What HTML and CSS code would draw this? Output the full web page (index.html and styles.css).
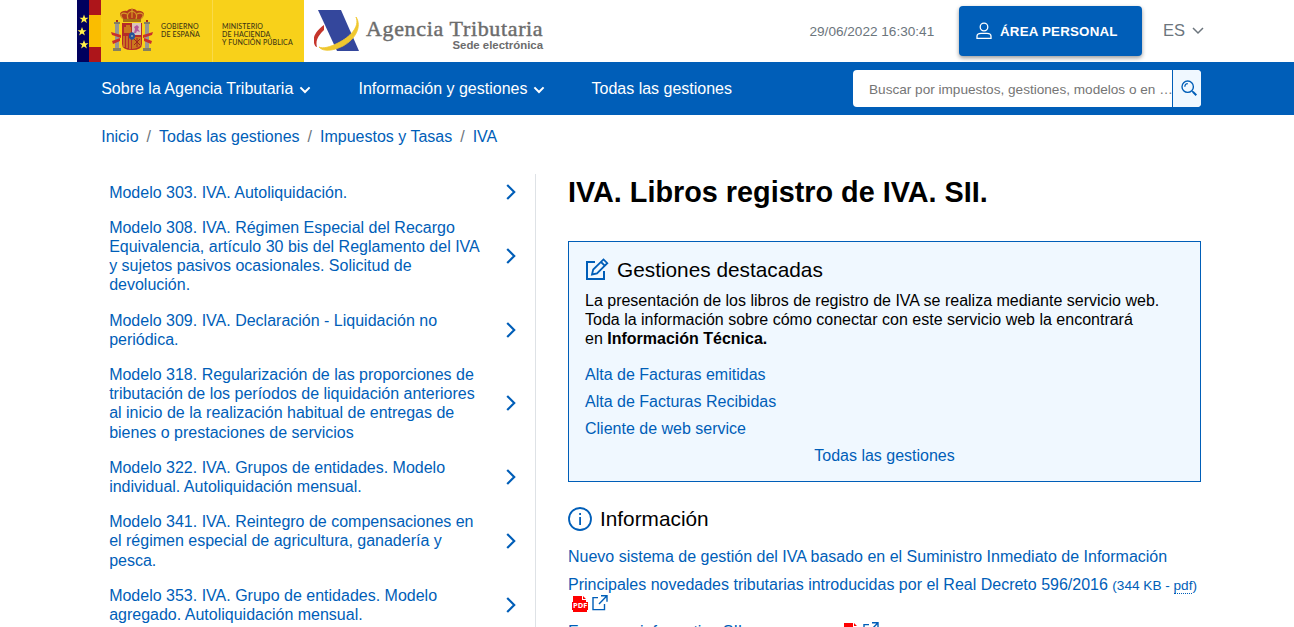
FILE: index.html
```html
<!DOCTYPE html>
<html lang="es">
<head>
<meta charset="utf-8">
<title>IVA. Libros registro de IVA. SII.</title>
<link rel="stylesheet" href="styles.css">
</head>
<body>
<svg class="defs" aria-hidden="true">
  <symbol id="right" viewBox="0 0 10 16"><path d="M1.2 1l7 7-7 7" fill="none" stroke="#005eb8" stroke-width="2.2"/></symbol>
  <symbol id="down" viewBox="0 0 12 8"><path d="M1.4 1.4L6 6l4.600-4.600" fill="none" stroke="currentColor" stroke-width="2"/></symbol>
  <symbol id="pdf" viewBox="0 0 16 16"><path d="M1 0h9v4h4v3H1z" fill="#f00"/><path d="M11 0l3 3h-3zM0 6h16v8h-1v2H1v-2H0z" fill="#f00"/></symbol>
  <symbol id="ext" viewBox="0 0 16 16"><path d="M6 2.600H1v12h11.500V9M9 .8h6v6M15 .8L7 9" fill="none" stroke="#005eb8" stroke-width="1.400"/></symbol>
</svg>
<header class="top">
  <div class="gov">
    <svg class="gov-art" viewBox="0 0 84 62" width="84" height="62">
      <path d="M0 0h12v62H0z" fill="#00005e"/>
      <path d="M12 0h12v62H12z" fill="#ad151a"/>
      <path d="M12 15h12v32H12z" fill="#fabd00"/>
      <g fill="#fff04a">
        <path id="star" d="M7 14.500l1.200 3.200h3.300L8.900 19.700l1 3.200L7 21l-2.900 1.900 1-3.200-2.600-2h3.300z"/>
        <use href="#star" x="-2" y="12.500"/><use href="#star" y="25.500"/>
      </g>
      <path d="M24 0h60v62H24z" fill="#f8d11a"/>
      <g fill="#989893"><path d="M38 24h4v25h-4zM68 24h4v25h-4z"/></g>
      <g fill="#85805f"><path d="M36 48h8v3h-8zM66 48h8v3h-8zM37 22h6v2h-6zM67 22h6v2h-6z"/></g>
      <path d="M39 22v-2h2v2zM69 22v-2h2v2z" fill="#a52d18"/>
      <path d="M34 32l10 3v3l-9-3zM35 41l8-3v3l-7 3zM76 32l-10 3v3l9-3zM75 41l-8-3v3l7 3z" fill="#c9302c"/>
      <path d="M46 19c-6-5-2-9 4-8 2-3 8-3 10 0 6-1 10 3 4 8z" fill="#b33b1b"/>
      <path d="M46 19c-5-5 0-7 4-5M64 19c5-5 0-7-4-5M51 19c-2-5 1-7 4-8 3 1 6 3 4 8M55 8v10" fill="none" stroke="#d69b25" stroke-width="1.200"/>
      <path d="M46 19h18v3H46z" fill="#a37116"/>
      <path d="M45 23h20v21q0 6-10 6t-10-6z" fill="#b52b28"/>
      <path d="M55 23h9v12h-9z" fill="#d9c3bd"/>
      <path d="M47 33v-6h2v-2h4v2h1v6zM55 37h9v8q-2 3-9 4z" fill="#cc771e"/>
      <path d="M47 36v11M50 36v12M53 38v11" stroke="#d9ab22" stroke-width="1.100"/>
      <path d="M57 33l1-4-1-2 3-2 2 2-1 2 2 3-3-1-1 2z" fill="#b5559b"/>
      <path d="M57 39l6 6M63 39l-6 6M60 38v9" stroke="#9e251c"/>
      <ellipse cx="55" cy="36" rx="3" ry="3.800" fill="#24549b"/>
      <path d="M54 35h2v2h-2z" fill="#7996a2"/>
    </svg>
    <div class="gov-text gob">GOBIERNO<br>DE ESPAÑA</div>
    <div class="gov-text min">MINISTERIO<br>DE HACIENDA<br>Y FUNCIÓN PÚBLICA</div>
  </div>
  <div class="brand">
    <svg viewBox="0 0 48 44" width="48" height="44">
      <path d="M10 16C3 21-2 28 0 34q1 4 3 4C1 31 5 26 10 21z" fill="#c5352c"/>
      <path d="M4 1h23l18 41H23z" fill="#34479c"/>
      <path d="M42 8c4 10-6 20-18 26-8 4-15 6-19 4 4 5 14 4 24-1C42 30 48 17 42 8z" fill="#efc72f" stroke="#efc72f" stroke-width=".8"/>
    </svg>
    <div class="brand-text"><div class="agency">Agencia Tributaria</div><div class="sede">Sede electrónica</div></div>
  </div>
  <div class="clock">29/06/2022 16:30:41</div>
  <button class="personal"><svg viewBox="0 0 16 18" width="16" height="18"><g fill="none" stroke="#fff" stroke-width="1.300"><circle cx="8" cy="5" r="3.800"/><path d="M1 16.300v-2q0-3 4-3h6q4 0 4 3v2z"/></g></svg>ÁREA PERSONAL</button>
  <div class="lang">ES<svg viewBox="0 0 12 8" width="12" height="8"><path d="M1 1l5 5 5-5" fill="none" stroke="#6c757d" stroke-width="1.500"/></svg></div>
</header>
<nav class="nav">
  <a class="n1">Sobre la Agencia Tributaria<svg><use href="#down"/></svg></a>
  <a class="n2">Información y gestiones<svg><use href="#down"/></svg></a>
  <a>Todas las gestiones</a>
  <div class="search"><div class="query">Buscar por impuestos, gestiones, modelos o en …</div><div class="go"><svg viewBox="0 0 16 16" width="16" height="16"><g fill="none" stroke="#005eb8" stroke-width="1.400"><circle cx="6.700" cy="6.700" r="5.700"/><path d="M3.800 6.700q0-3 3-3M11 11l.8.8" stroke-width="1.200"/><path d="M11.800 11.800l3.500 3.400" stroke-width="2"/></g></svg></div></div>
</nav>
<div class="crumbs"><a>Inicio</a><i>/</i><a>Todas las gestiones</a><i>/</i><a>Impuestos y Tasas</a><i>/</i><a>IVA</a></div>
<div class="page">
  <aside class="side">
    <a><span>Modelo 303. IVA. Autoliquidación.</span><svg><use href="#right"/></svg></a>
    <a><span>Modelo 308. IVA. Régimen Especial del Recargo Equivalencia, artículo 30 bis del Reglamento del IVA y sujetos pasivos ocasionales. Solicitud de devolución.</span><svg><use href="#right"/></svg></a>
    <a><span>Modelo 309. IVA. Declaración - Liquidación no periódica.</span><svg><use href="#right"/></svg></a>
    <a><span>Modelo 318. Regularización de las proporciones de tributación de los períodos de liquidación anteriores al inicio de la realización habitual de entregas de bienes o prestaciones de servicios</span><svg><use href="#right"/></svg></a>
    <a><span>Modelo 322. IVA. Grupos de entidades. Modelo individual. Autoliquidación mensual.</span><svg><use href="#right"/></svg></a>
    <a><span>Modelo 341. IVA. Reintegro de compensaciones en el régimen especial de agricultura, ganadería y pesca.</span><svg><use href="#right"/></svg></a>
    <a><span>Modelo 353. IVA. Grupo de entidades. Modelo agregado. Autoliquidación mensual.</span><svg><use href="#right"/></svg></a>
  </aside>
  <main class="main">
    <h1>IVA. Libros registro de IVA. SII.</h1>
    <section class="box">
      <h2><svg viewBox="0 0 24 24" width="24" height="24"><g fill="none" stroke="#005eb8"><path d="M10 4H2v17h17v-8" stroke-width="2"/><path d="M7 16.500l1.200-5L18.500 1.400l3.800 3.800L12 15.400zM16 4l3.700 3.700" stroke-width="1.800"/></g></svg>Gestiones destacadas</h2>
      <p>La presentación de los libros de registro de IVA se realiza mediante servicio web.<br>Toda la información sobre cómo conectar con este servicio web la encontrará<br>en <b>Información Técnica.</b></p>
      <a>Alta de Facturas emitidas</a>
      <a>Alta de Facturas Recibidas</a>
      <a>Cliente de web service</a>
      <a class="all">Todas las gestiones</a>
    </section>
    <h2 class="info"><svg viewBox="0 0 24 24" width="24" height="24"><circle cx="12" cy="12" r="11" fill="none" stroke="#005eb8" stroke-width="1.800"/><path d="M11.200 6h1.800v2h-1.800zM11.200 10h1.800v8h-1.800z" fill="#005eb8"/></svg>Información</h2>
    <a class="doc">Nuevo sistema de gestión del IVA basado en el Suministro Inmediato de Información</a>
    <a class="doc long">Principales novedades tributarias introducidas por el Real Decreto 596/2016 <small>(344 KB - <abbr>pdf</abbr>)</small> <span class="pdf"><svg><use href="#pdf"/></svg><b>PDF</b></span><svg class="ext"><use href="#ext"/></svg></a>
    <a class="doc last">Esquema informativo SII <small>(344 KB - <abbr>pdf</abbr>)</small> <span class="pdf"><svg><use href="#pdf"/></svg><b>PDF</b></span><svg class="ext"><use href="#ext"/></svg></a>
  </main>
</div>
</body>
</html>
```
FILE: styles.css
```css
* { box-sizing: border-box; }
html { overflow: hidden; }
body { margin: 0; height: 627px; overflow: hidden; background: #fff; color: #000; font: 16px/19.2px "Liberation Sans", Arial, sans-serif; }
svg { display: block; flex: none; }
.defs { position: absolute; width: 0; height: 0; }
a { color: #005eb8; }
.top { display: flex; height: 62px; padding-left: 77px; }
.gov { display: flex; width: 227px; background: #f8d11a; }
.gov-text { font: 7px/8px Lato, sans-serif; font-weight: 500; letter-spacing: .12px; color: #3d3515; white-space: nowrap; }
.gob { width: 51px; padding-top: 22px; }
.min { width: 92px; padding: 22px 0 0 9px; border-left: 1px solid #f9da4a; }
.brand { display: flex; padding: 9px 0 0 10px; width: 240px; }
.brand-text { margin-left: 4px; width: 177px; color: #6c6c6c; white-space: nowrap; }
.agency { margin-top: 10px; font: 22px/20px "Liberation Serif", serif; letter-spacing: .65px; -webkit-text-stroke: .45px #6c6c6c; }
.sede { text-align: right; font-weight: bold; font-size: 11.400px; line-height: 12px; }
.clock { margin-left: 265.500px; width: 149.500px; font-size: 13.600px; line-height: 63px; color: #6c757d; white-space: nowrap; }
.personal { display: flex; align-items: center; gap: 8px; width: 183px; height: 50px; margin-top: 6px; padding: 0 0 0 17px; border: 0; border-radius: 4px; background: #005eb8; color: #fff; font: bold 13.333px "Liberation Sans", sans-serif; letter-spacing: .2px; box-shadow: 0 2px 4px rgba(0,0,0,.4); white-space: nowrap; }
.lang { display: flex; align-items: center; gap: 7px; margin-left: 21px; font-size: 16.500px; color: #6c757d; }
.nav { display: flex; align-items: center; height: 53px; padding-left: 101.200px; background: #005eb8; }
.nav > a { display: flex; align-items: center; color: #fff; white-space: nowrap; }
.nav > a svg { width: 12px; height: 8px; margin: 3px 0 0 6px; }
.n1 { width: 257.300px; }
.n2 { width: 233px; }
.search { display: flex; width: 348px; height: 37px; margin-left: auto; margin-right: 93px; background: #fff; border-radius: 4px; overflow: hidden; }
.query { width: 319px; padding: 1px 0 0 16px; font-size: 13.600px; line-height: 37px; color: #757575; white-space: nowrap; }
.go { display: flex; align-items: center; width: 29px; padding-left: 8px; border-left: 1px solid #005eb8; background: #f0f8ff; }
.go svg { margin-top: -2px; }
.crumbs { display: flex; padding: 12px 0 0 101.200px; height: 59px; }
.crumbs i { padding: 0 8px; font-style: normal; color: #6c757d; }
.page { display: flex; padding-left: 101px; }
.side { width: 435px; height: 453px; padding: .55px 0 0 .15px; border-right: 1px solid #dee2e6; }
.side a { display: flex; align-items: center; padding: 8px; }
.side span { width: 378px; }
.side svg { width: 10px; height: 16px; margin-left: 19px; }
.main { width: 633px; margin-left: 32px; }
h1 { margin: 0; font-size: 28.800px; line-height: 36px; white-space: nowrap; }
.box { display: flex; flex-direction: column; height: 241px; margin-top: 31px; padding: 15px 16px 16px; border: 1px solid #005eb8; background: #f0f8ff; }
h2 { display: flex; align-items: center; gap: 8px; margin: 0; font-weight: 400; font-size: 20.800px; line-height: 25px; }
.box p { margin: 9px 0 16px; white-space: nowrap; }
.box a { margin-bottom: 7.800px; }
.box .all { align-self: center; }
.info { margin: 24px 0 16.400px; }
.doc { display: block; margin-bottom: 8.400px; width: 640px; }
.long { margin-bottom: 7.800px; }
.doc small { font-size: 13.600px; }
.doc abbr { text-decoration: none; border-bottom: 1px dotted #005eb8; }
.pdf { position: relative; display: inline-block; width: 16px; height: 16px; margin-left: 4px; vertical-align: -2px; }
.last .pdf { margin-left: 7px; }
.pdf svg { width: 16px; height: 16px; }
.pdf b { position: absolute; left: 1px; top: 5px; font: bold 7.500px/8px "Open Sans", sans-serif; color: #fff; }
.ext { display: inline-block; width: 16px; height: 16px; margin-left: 4px; vertical-align: -1px; }
```
